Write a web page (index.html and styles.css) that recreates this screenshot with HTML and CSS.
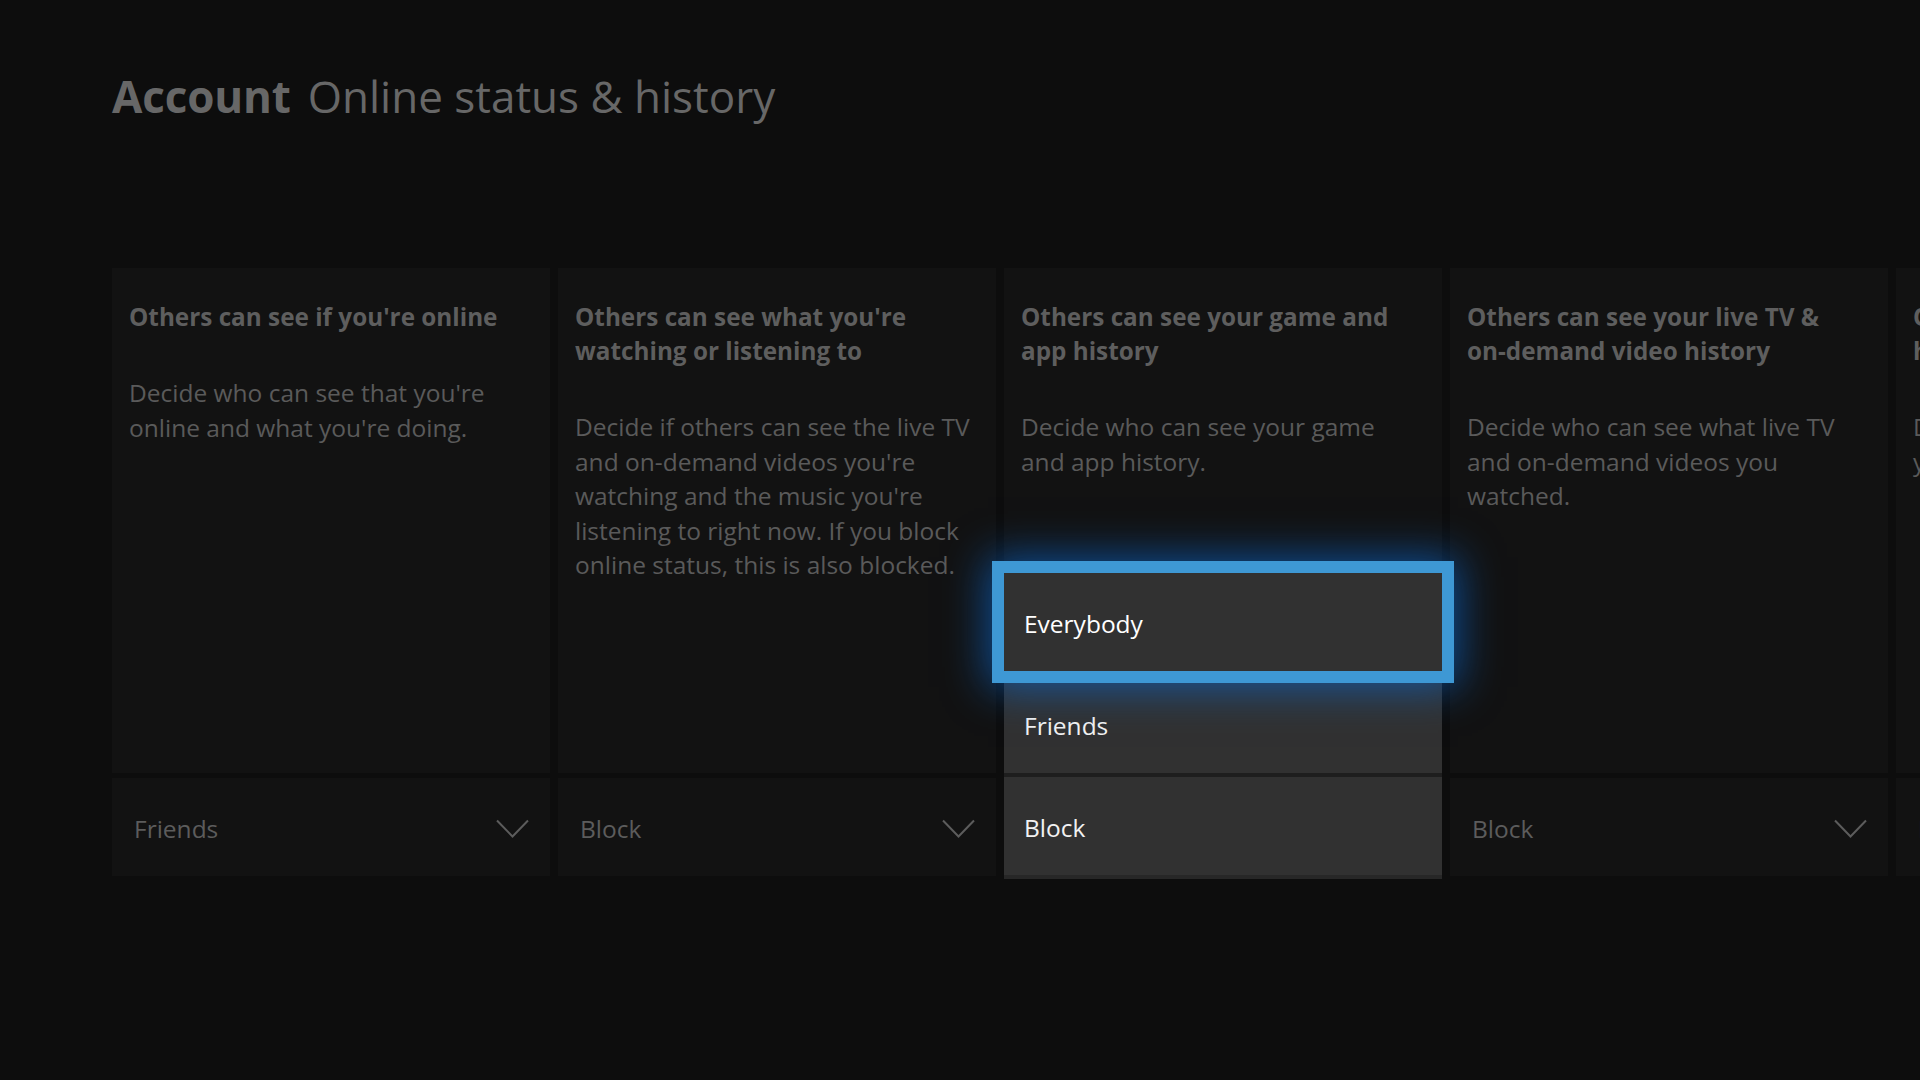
FILE: index.html
```html
<!DOCTYPE html>
<html lang="en">
<head>
<meta charset="utf-8">
<title>Account - Online status &amp; history</title>
<link rel="stylesheet" href="styles.css">
</head>
<body>
<header class="page-header">
  <h1 class="title"><span class="title-main">Account</span><span class="title-sub">Online status &amp; history</span></h1>
</header>
<main class="settings">
  <section class="setting">
    <div class="panel">
      <h2 class="heading">Others can see if you're online</h2>
      <p class="desc">Decide who can see that you're<br>online and what you're doing.</p>
    </div>
    <div class="dropdown"><span class="value">Friends</span><svg class="chev" width="33" height="19" viewBox="0 0 33 19"><polyline points="1,1.5 16.5,17.5 32,1.5"/></svg></div>
  </section>
  <section class="setting">
    <div class="panel">
      <h2 class="heading">Others can see what you're<br>watching or listening to</h2>
      <p class="desc">Decide if others can see the live TV<br>and on-demand videos you're<br>watching and the music you're<br>listening to right now. If you block<br>online status, this is also blocked.</p>
    </div>
    <div class="dropdown"><span class="value">Block</span><svg class="chev" width="33" height="19" viewBox="0 0 33 19"><polyline points="1,1.5 16.5,17.5 32,1.5"/></svg></div>
  </section>
  <section class="setting is-open">
    <div class="panel">
      <h2 class="heading">Others can see your game and<br>app history</h2>
      <p class="desc">Decide who can see your game<br>and app history.</p>
    </div>
    <div class="dropdown"><span class="value">Block</span><svg class="chev" width="33" height="19" viewBox="0 0 33 19"><polyline points="1,1.5 16.5,17.5 32,1.5"/></svg></div>
    <ul class="menu">
      <li class="menu-item is-focused">Everybody</li>
      <li class="menu-item">Friends</li>
      <li class="menu-item">Block</li>
    </ul>
  </section>
  <section class="setting">
    <div class="panel">
      <h2 class="heading">Others can see your live TV &amp;<br>on-demand video history</h2>
      <p class="desc">Decide who can see what live TV<br>and on-demand videos you<br>watched.</p>
    </div>
    <div class="dropdown"><span class="value">Block</span><svg class="chev" width="33" height="19" viewBox="0 0 33 19"><polyline points="1,1.5 16.5,17.5 32,1.5"/></svg></div>
  </section>
  <section class="setting">
    <div class="panel">
      <h2 class="heading">Others can see your music<br>history</h2>
      <p class="desc">Decide who can see the music<br>you've listened to.</p>
    </div>
    <div class="dropdown"><span class="value">Block</span><svg class="chev" width="33" height="19" viewBox="0 0 33 19"><polyline points="1,1.5 16.5,17.5 32,1.5"/></svg></div>
  </section>
</main>
</body>
</html>
```

FILE: styles.css
```css
html, body {
  margin: 0;
  padding: 0;
}

body {
  width: 1920px;
  height: 1080px;
  overflow: hidden;
  background: #0d0d0d;
  font-family: "Open Sans", "Noto Sans", "DejaVu Sans", sans-serif;
  color: #5c5c5c;
}

.page-header {
  padding: 66px 0 0 112px;
}

.title {
  margin: 0;
  display: flex;
  gap: 17px;
  font-size: 44px;
  line-height: 60px;
  color: #676767;
  white-space: nowrap;
}

.title-main {
  font-weight: 700;
  letter-spacing: -0.15px;
}

.title-sub {
  font-weight: 400;
  letter-spacing: 0;
}

.settings {
  margin-top: 142px;
  padding-left: 112px;
  display: flex;
  gap: 8px;
}

.setting {
  position: relative;
  flex: 0 0 438px;
  display: flex;
  flex-direction: column;
  gap: 5px;
}

.panel {
  height: 505px;
  box-sizing: border-box;
  padding: 32px 14px 0 17px;
  background: #121212;
}

.heading {
  margin: 0;
  font-size: 24.3px;
  line-height: 34px;
  font-weight: 700;
  color: #5e5e5e;
  white-space: nowrap;
}

.desc {
  margin: 42px 0 0;
  font-size: 24.5px;
  line-height: 34.5px;
  font-weight: 400;
  color: #5a5a5a;
  white-space: nowrap;
}

.dropdown {
  height: 98px;
  box-sizing: border-box;
  padding: 3px 21px 0 22px;
  background: #121212;
  display: flex;
  align-items: center;
  justify-content: space-between;
}

.value {
  font-size: 24.5px;
  line-height: 34px;
  color: #5c5c5c;
}

.chev {
  display: block;
  fill: none;
  stroke: #5c5c5c;
  stroke-width: 2;
}

.menu {
  position: absolute;
  z-index: 1;
  top: 305px;
  left: 0;
  right: 0;
  margin: 0;
  padding: 0;
  list-style: none;
  display: flex;
  flex-direction: column;
  gap: 4px;
  background: #1e1e1e;
  border-bottom: 4px solid #272727;
}

.menu-item {
  height: 98px;
  box-sizing: border-box;
  padding: 3px 20px 0;
  display: flex;
  align-items: center;
  background: #313131;
  font-size: 24.5px;
  line-height: 34px;
  color: #f2f2f2;
}

.menu-item.is-focused {
  position: relative;
  z-index: 2;
  color: #ffffff;
  box-shadow: 0 0 0 12px #3e98d4, 0 0 40px 16px rgba(12, 104, 206, 0.7);
}
```
